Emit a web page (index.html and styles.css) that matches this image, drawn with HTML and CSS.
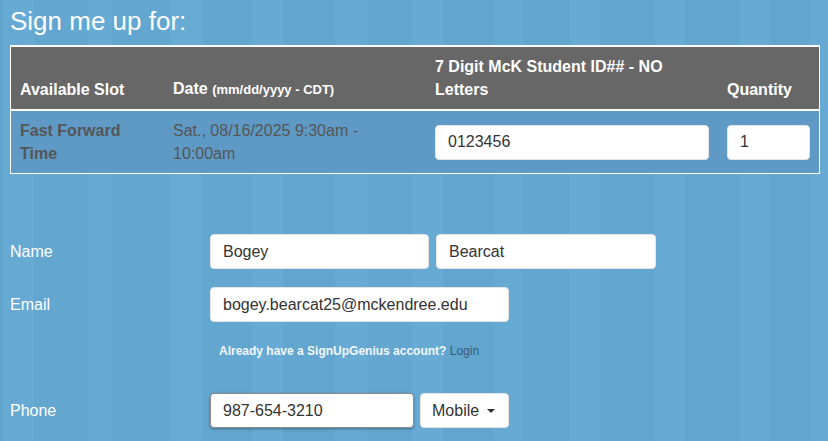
FILE: index.html
```html
<!DOCTYPE html>
<html lang="en">
<head>
<meta charset="utf-8">
<title>Sign me up</title>
<link rel="stylesheet" href="styles.css">
</head>
<body>
<div class="page">
  <h2 class="title">Sign me up for:</h2>
  <table class="slots">
    <colgroup>
      <col class="c1"><col class="c2"><col class="c3"><col class="c4">
    </colgroup>
    <thead>
      <tr>
        <th>Available Slot</th>
        <th>Date <small>(mm/dd/yyyy - CDT)</small></th>
        <th>7 Digit McK Student ID## - NO Letters</th>
        <th>Quantity</th>
      </tr>
    </thead>
    <tbody>
      <tr>
        <td class="slot">Fast Forward Time</td>
        <td class="date">Sat., 08/16/2025 9:30am - 10:00am</td>
        <td><input class="field" type="text" value="0123456"></td>
        <td><input class="field" type="text" value="1"></td>
      </tr>
    </tbody>
  </table>

  <form class="info">
    <div class="row">
      <label class="lbl">Name</label>
      <div class="ctrls">
        <input class="field first" type="text" value="Bogey">
        <input class="field last" type="text" value="Bearcat">
      </div>
    </div>
    <div class="row">
      <label class="lbl">Email</label>
      <div class="ctrls">
        <input class="field email" type="text" value="bogey.bearcat25@mckendree.edu">
      </div>
    </div>
    <p class="help">Already have a SignUpGenius account? <a class="login" href="#">Login</a></p>
    <div class="row">
      <label class="lbl">Phone</label>
      <div class="ctrls ctrls-phone">
        <input class="field phone" type="text" value="987-654-3210">
        <button class="drop" type="button">Mobile <span class="caret"></span></button>
      </div>
    </div>
  </form>
</div>
</body>
</html>
```

FILE: styles.css
```css
html, body {
  margin: 0;
  padding: 0;
}
body {
  font-family: "Liberation Sans", Arial, sans-serif;
  font-size: 16px;
  color: #fff;
  min-height: 441px;
  background-color: #64a7d1;
  background-image: linear-gradient(to right,
    #61a4ce 0px, #61a4ce 3px,
    #66aad4 3px, #67abd5 34px,
    #63a6d0 34px, #63a6d0 87px,
    #67abd5 87px, #67abd5 112px,
    #63a6d0 112px, #63a6d0 170px,
    #68acd6 170px, #68acd6 202px,
    #63a6d0 202px, #63a6d0 252px,
    #67abd5 252px, #67abd5 283px,
    #62a5cf 283px, #62a5cf 335px,
    #67abd5 335px, #67abd5 367px,
    #63a6d0 367px, #63a6d0 412px,
    #67abd5 412px, #67abd5 443px,
    #62a5cf 443px, #62a5cf 493px,
    #66aad4 493px, #66aad4 523px,
    #63a6d0 523px, #63a6d0 570px,
    #67abd5 570px, #67abd5 600px,
    #62a5cf 600px, #62a5cf 655px,
    #67abd5 655px, #67abd5 685px,
    #62a5cf 685px, #62a5cf 740px,
    #67abd5 740px, #67abd5 770px,
    #62a5cf 770px, #62a5cf 810px,
    #66aad4 810px, #66aad4 828px);
}
.page {
  padding: 0 8px 0 10px;
}
.title {
  font-size: 26px;
  font-weight: normal;
  line-height: 30px;
  margin: 6px 0 9px;
  color: #fbfdff;
}
.slots {
  width: 810px;
  table-layout: fixed;
  border-collapse: separate;
  border-spacing: 0;
  border: 1px solid #fff;
  border-top-width: 2px;
}
.c1 { width: 153px; }
.c2 { width: 262px; }
.c3 { width: 292px; }
.c4 { width: 101px; }
.slots th {
  background: #676767;
  color: #fff;
  font-weight: bold;
  font-size: 16px;
  line-height: 23px;
  text-align: left;
  vertical-align: bottom;
  padding: 8px 9px;
  border-bottom: 2px solid #fff;
}
.slots th small {
  font-size: 13px;
}
.slots td {
  background: #5e9ac5;
  color: #555;
  font-size: 16px;
  line-height: 23px;
  vertical-align: middle;
  padding: 8px 9px;
}
.slots td.slot {
  font-weight: bold;
}
.field {
  box-sizing: border-box;
  height: 35px;
  padding: 0 12px;
  font-family: "Liberation Sans", Arial, sans-serif;
  font-size: 16px;
  color: #333;
  background: #fff;
  border: 1px solid #e4e4e4;
  border-radius: 4px;
  outline: none;
  display: block;
}
.slots .field {
  width: 100%;
}
.info {
  margin-top: 60px;
}
.row {
  display: flex;
  align-items: center;
  margin-bottom: 18px;
}
.lbl {
  width: 200px;
  flex: none;
  font-size: 16px;
  color: #fff;
}
.ctrls {
  display: flex;
  gap: 7px;
}
.ctrls-phone {
  gap: 6px;
}
.first { width: 219px; }
.last { width: 220px; }
.email { width: 299px; }
.phone {
  width: 204px;
  border-color: #8a8a8a;
  box-shadow: 0 1px 3px rgba(0, 0, 0, 0.35);
}
.help {
  margin: 21px 0 33px 209px;
  font-size: 12px;
  line-height: 17px;
  font-weight: bold;
  color: #f2f7fb;
}
.login {
  font-weight: normal;
  color: #3c5a70;
  text-decoration: none;
}
.drop {
  box-sizing: border-box;
  height: 35px;
  width: 89px;
  padding: 0 11px;
  text-align: left;
  font-family: "Liberation Sans", Arial, sans-serif;
  font-size: 16px;
  color: #333;
  background: #fff;
  border: 1px solid #e4e4e4;
  border-radius: 4px;
  display: flex;
  align-items: center;
  gap: 8px;
}
.caret {
  width: 0;
  height: 0;
  border-left: 4px solid transparent;
  border-right: 4px solid transparent;
  border-top: 4px solid #333;
}
```
